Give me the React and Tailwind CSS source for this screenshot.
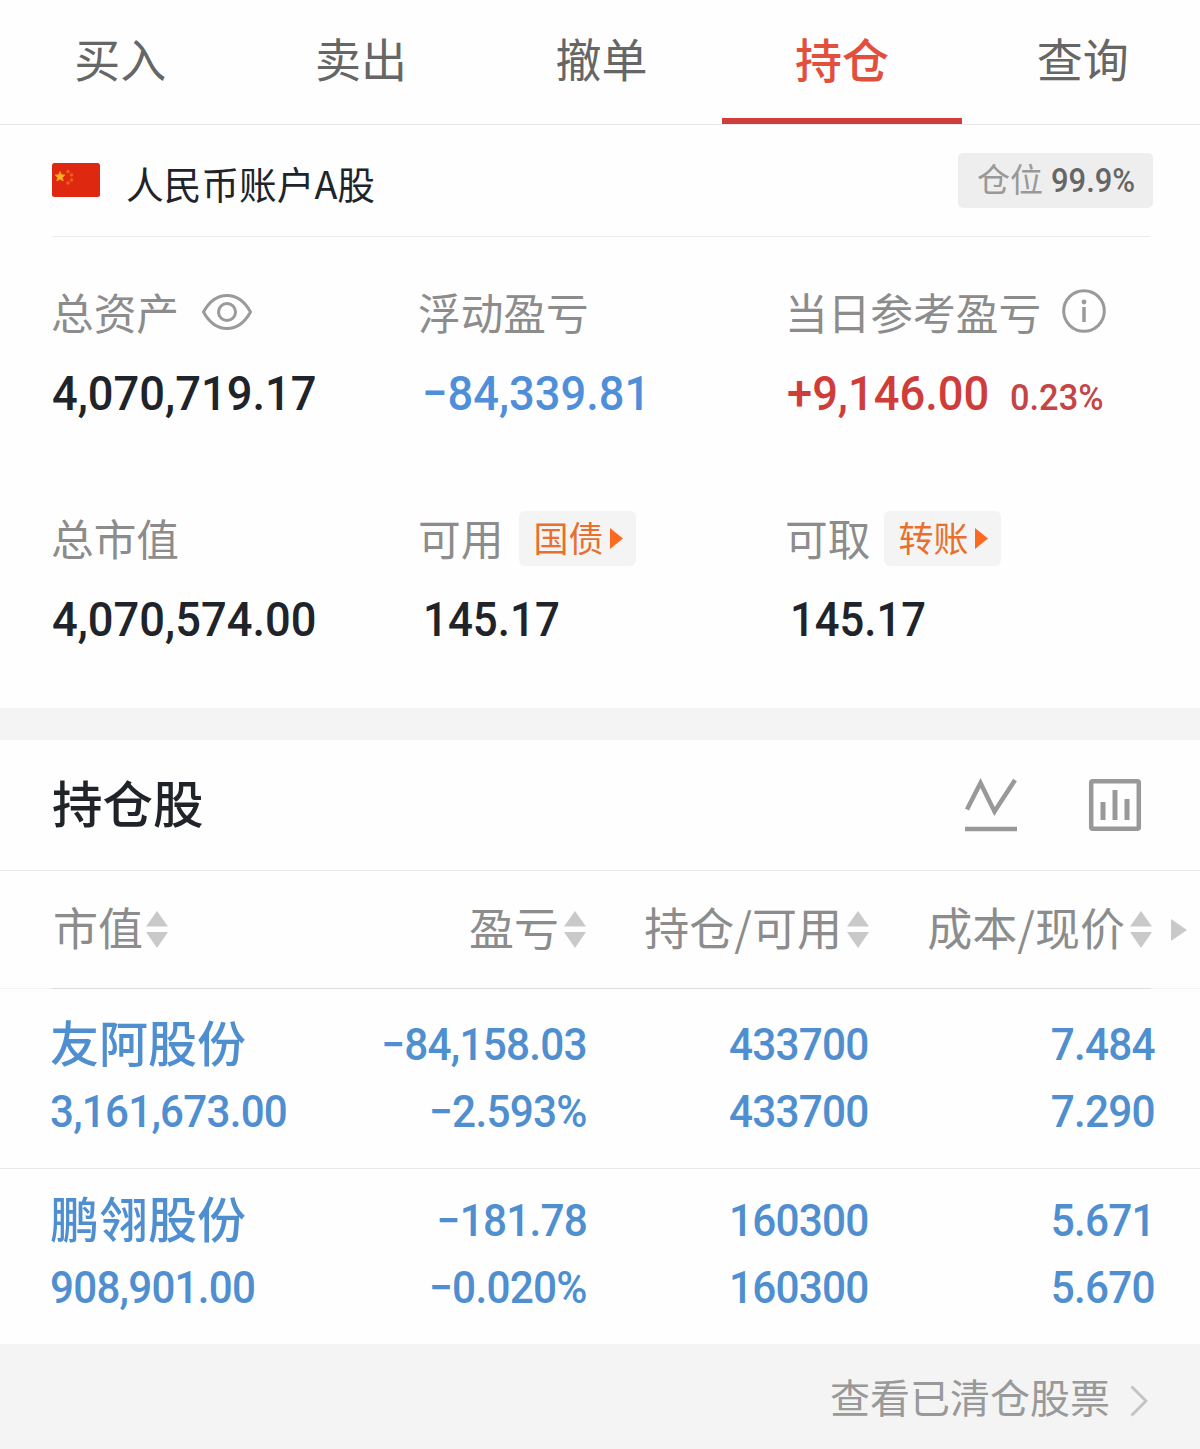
import { useState } from 'react';
import clsx from 'clsx';

const tabs = ['买入', '卖出', '撤单', '持仓', '查询'];

const holdings = [
  {
    name: '友阿股份',
    marketValue: '3,161,673.00',
    profit: '−84,158.03',
    profitRate: '−2.593%',
    amount: '433700',
    available: '433700',
    cost: '7.484',
    price: '7.290',
  },
  {
    name: '鹏翎股份',
    marketValue: '908,901.00',
    profit: '−181.78',
    profitRate: '−0.020%',
    amount: '160300',
    available: '160300',
    cost: '5.671',
    price: '5.670',
  },
];

function FlagIcon() {
  return (
    <svg width="48" height="34" viewBox="0 0 48 34">
      <rect width="48" height="34" rx="2.5" fill="#de2910" />
      <path d="M8 8.500l1.500 3.200 3.500.3-2.600 2.400.8 3.500L8 16.200l-3.200 1.700.8-3.500L3 12l3.500-.3z" fill="#ffb61e" stroke="#f58a1f" strokeWidth="1" />
      <g fill="#f0601f">
        <circle cx="16" cy="8.500" r="1.700" />
        <circle cx="19.500" cy="12" r="1.700" />
        <circle cx="19.500" cy="17" r="1.700" />
        <circle cx="16" cy="20" r="1.700" />
      </g>
    </svg>
  );
}

function EyeIcon() {
  return (
    <svg width="50" height="38" viewBox="0 0 50 38" fill="none" stroke="#9a9a9a" strokeWidth="3">
      <path d="M1.500 19C7 9 15 2.500 25 2.500S43 9 48.500 19C43 29 35 35.500 25 35.500S7 29 1.500 19z" strokeLinejoin="round" />
      <circle cx="25" cy="19" r="8.500" />
    </svg>
  );
}

function InfoIcon() {
  return (
    <svg width="44" height="44" viewBox="0 0 44 44" fill="none">
      <circle cx="22" cy="22" r="20.300" stroke="#9a9a9a" strokeWidth="3" />
      <circle cx="22" cy="13" r="2.400" fill="#9a9a9a" />
      <path d="M22 18v15" stroke="#9a9a9a" strokeWidth="3.500" />
    </svg>
  );
}

function SortIcon() {
  return (
    <svg width="22" height="37" viewBox="0 0 22 37" fill="#c9c9c9">
      <path d="M11 0l11 15.500H0z" />
      <path d="M0 21h22L11 37z" />
    </svg>
  );
}

// 数字略微压窄，接近 DIN 字形
function Num({ children, className }) {
  return (
    <span className={clsx("inline-block font-['Roboto',sans-serif] font-medium whitespace-nowrap", className)}>
      {children}
    </span>
  );
}

function ActionTag({ children }) {
  return (
    <button className="flex h-[55px] w-[117px] items-center rounded-md bg-[#f4f4f4] pl-[14px] text-[35px] text-[#e8702f]">
      <span className="pb-px">{children}</span>
      <svg width="13" height="21" viewBox="0 0 13 21" className="ml-[7px]" fill="#fb6a20">
        <path d="M0 0l13 10.500L0 21z" />
      </svg>
    </button>
  );
}

function SummaryItem({ label, extra, children }) {
  return (
    <div>
      <div className="flex h-[56px] items-center text-[42.700px] whitespace-nowrap text-[#8c8c8c]">
        <span className="-ml-px pb-[2px]">{label}</span>
        {extra}
      </div>
      <div className="mt-[25px] flex h-[58px] items-baseline leading-[58px]">{children}</div>
    </div>
  );
}

function HeaderCell({ children, className }) {
  return (
    <div className={clsx('flex items-center text-[45px] whitespace-nowrap text-[#8c8c8c]', className)}>
      <span className="pb-[5px]">{children}</span>
      <SortIcon />
    </div>
  );
}

function HoldingCell({ top, bottom }) {
  return (
    <div className="flex flex-col items-end">
      <Num className="h-[67px] origin-right scale-x-[0.94] text-[45px] leading-[67px] tracking-[-0.8px]">{top}</Num>
      <Num className="h-[67px] origin-right scale-x-[0.94] text-[45px] leading-[67px] tracking-[-0.8px]">{bottom}</Num>
    </div>
  );
}

export default function App() {
  const [activeTab, setActiveTab] = useState('持仓');

  return (
    <div className="h-[1449px] w-[1200px] overflow-hidden bg-[#fefefe] font-['Noto_Sans_CJK_SC',sans-serif] text-[#20242a]">
      {/* 顶部标签 */}
      <div className="flex h-[125px] overflow-hidden border-b border-[#e8e8e8]">
        {tabs.map(tab => (
          <button
            key={tab}
            onClick={() => setActiveTab(tab)}
            className={clsx(
              'flex h-[124px] w-[240.6px] shrink-0 justify-center border-b-[6px] leading-[115px]',
              tab === activeTab ? 'border-[#cf3d3d] text-[47px] text-[#e2503d] font-medium' : 'border-transparent text-[46px] text-[#666]'
            )}
          >
            {tab}
          </button>
        ))}
      </div>

      {/* 账户 */}
      <div className="mr-[50px] ml-[52px] flex h-[112px] items-center border-b border-[#ececec]">
        <div className="pb-[2px]"><FlagIcon /></div>
        <span className="ml-[26px] pt-[5px] text-[37.700px]">人民币账户A股</span>
        <div className="-mr-[3px] ml-auto flex h-[55px] w-[195px] items-center gap-[8px] rounded-[5px] bg-[#eee] pl-[19px]">
          <span className="pb-[4px] text-[33px] text-[#999]">仓位</span>
          <Num className="origin-left scale-x-[0.91] text-[34px] text-[#666]">99.9%</Num>
        </div>
      </div>

      {/* 资产汇总 */}
      <div className="grid h-[471px] grid-cols-[367px_367px_1fr] content-start gap-y-[87px] pt-[47px] pl-[52px]">
        <SummaryItem label="总资产" extra={<span className="ml-[23px]"><EyeIcon /></span>}>
          <Num className="origin-left scale-x-[0.924] text-[49px]">4,070,719.17</Num>
        </SummaryItem>
        <SummaryItem label="浮动盈亏">
          <Num className="ml-[3px] origin-left scale-x-[0.924] text-[49px] text-[#4f8fd9]">−84,339.81</Num>
        </SummaryItem>
        <SummaryItem label="当日参考盈亏" extra={<span className="ml-[21px] pb-[2px]"><InfoIcon /></span>}>
          <Num className="ml-px origin-left scale-x-[0.924] text-[49px] text-[#cf3d3a]">+9,146.00</Num>
          <Num className="ml-[4px] origin-left scale-x-[0.93] text-[37px] text-[#c44545]">0.23%</Num>
        </SummaryItem>
        <SummaryItem label="总市值">
          <Num className="origin-left scale-x-[0.924] text-[49px]">4,070,574.00</Num>
        </SummaryItem>
        <SummaryItem label="可用" extra={<span className="ml-[16px]"><ActionTag>国债</ActionTag></span>}>
          <Num className="ml-[4px] origin-left scale-x-[0.895] text-[49px]">145.17</Num>
        </SummaryItem>
        <SummaryItem label="可取" extra={<span className="ml-[14px]"><ActionTag>转账</ActionTag></span>}>
          <Num className="ml-[4px] origin-left scale-x-[0.89] text-[49px]">145.17</Num>
        </SummaryItem>
      </div>

      <div className="h-[32px] bg-[#f4f4f4]" />

      {/* 持仓股 */}
      <div className="flex h-[131px] items-center border-b border-[#e8e8e8] pr-[58px] pl-[52px]">
        <h2 className="pb-[6px] text-[50.500px] font-medium">持仓股</h2>
        <svg width="54" height="54" viewBox="0 0 54 54" className="ml-auto" fill="none" stroke="#999" strokeWidth="4.500">
          <path d="M3 31.500L16.500 5l14 28.500L51 2" />
          <path d="M1 51h52" />
        </svg>
        <svg width="54" height="54" viewBox="0 0 54 54" className="ml-[70px]" fill="none" stroke="#999">
          <rect x="3.200" y="3.200" width="47.600" height="47.600" rx="1.500" strokeWidth="4.500" />
          <path d="M15 24v18M27 12v30M39 21v21" strokeWidth="5" />
        </svg>
      </div>

      <div className="flex h-[117px] items-center pl-[52px]">
        <div className="grid grid-cols-[237px_298px_282px_283px]">
          <HeaderCell className="gap-[3px] pl-px">市值</HeaderCell>
          <HeaderCell className="justify-end gap-[5px] pr-px">盈亏</HeaderCell>
          <HeaderCell className="justify-end gap-[5px]">持仓/可用</HeaderCell>
          <HeaderCell className="justify-end gap-[5px]">成本/现价</HeaderCell>
        </div>
        <svg width="16" height="22" viewBox="0 0 16 22" className="ml-[19px]" fill="#c9c9c9">
          <path d="M0 0l16 11L0 22z" />
        </svg>
      </div>
      <div className="h-px bg-[#f3f3f3] pr-[49px] pl-[52px]">
        <div className="h-px bg-[#dedede]" />
      </div>

      {holdings.map((item, index) => (
        <div
          key={item.name}
          className={clsx(
            'grid grid-cols-[237px_298px_282px_286px] pl-[52px] text-[#4f8fd0]',
            index === 0 ? 'h-[180px] border-b border-[#e8e8e8] pt-[22px]' : 'h-[175px] pt-[18px]'
          )}
        >
          <div className="-ml-[2px] flex flex-col items-start whitespace-nowrap">
            <span className="h-[67px] text-[49px] leading-[60px] font-medium">{item.name}</span>
            <Num className="h-[67px] origin-left scale-x-[0.936] text-[45px] leading-[67px] tracking-[-0.8px]">{item.marketValue}</Num>
          </div>
          <HoldingCell top={item.profit} bottom={item.profitRate} />
          <HoldingCell top={item.amount} bottom={item.available} />
          <HoldingCell top={item.cost} bottom={item.price} />
        </div>
      ))}

      {/* 已清仓入口 */}
      <div className="flex h-[105px] items-center justify-end bg-[#f4f4f4] pr-[52px] text-[40px] text-[#999]">
        <span className="pb-[2px]">查看已清仓股票</span>
        <svg width="18" height="32" viewBox="0 0 18 32" className="mt-[8px] ml-[20px]" fill="none" stroke="#c4c4c4" strokeWidth="3">
          <path d="M1.500 1.500L16 16 1.500 30.500" />
        </svg>
      </div>
    </div>
  );
}
